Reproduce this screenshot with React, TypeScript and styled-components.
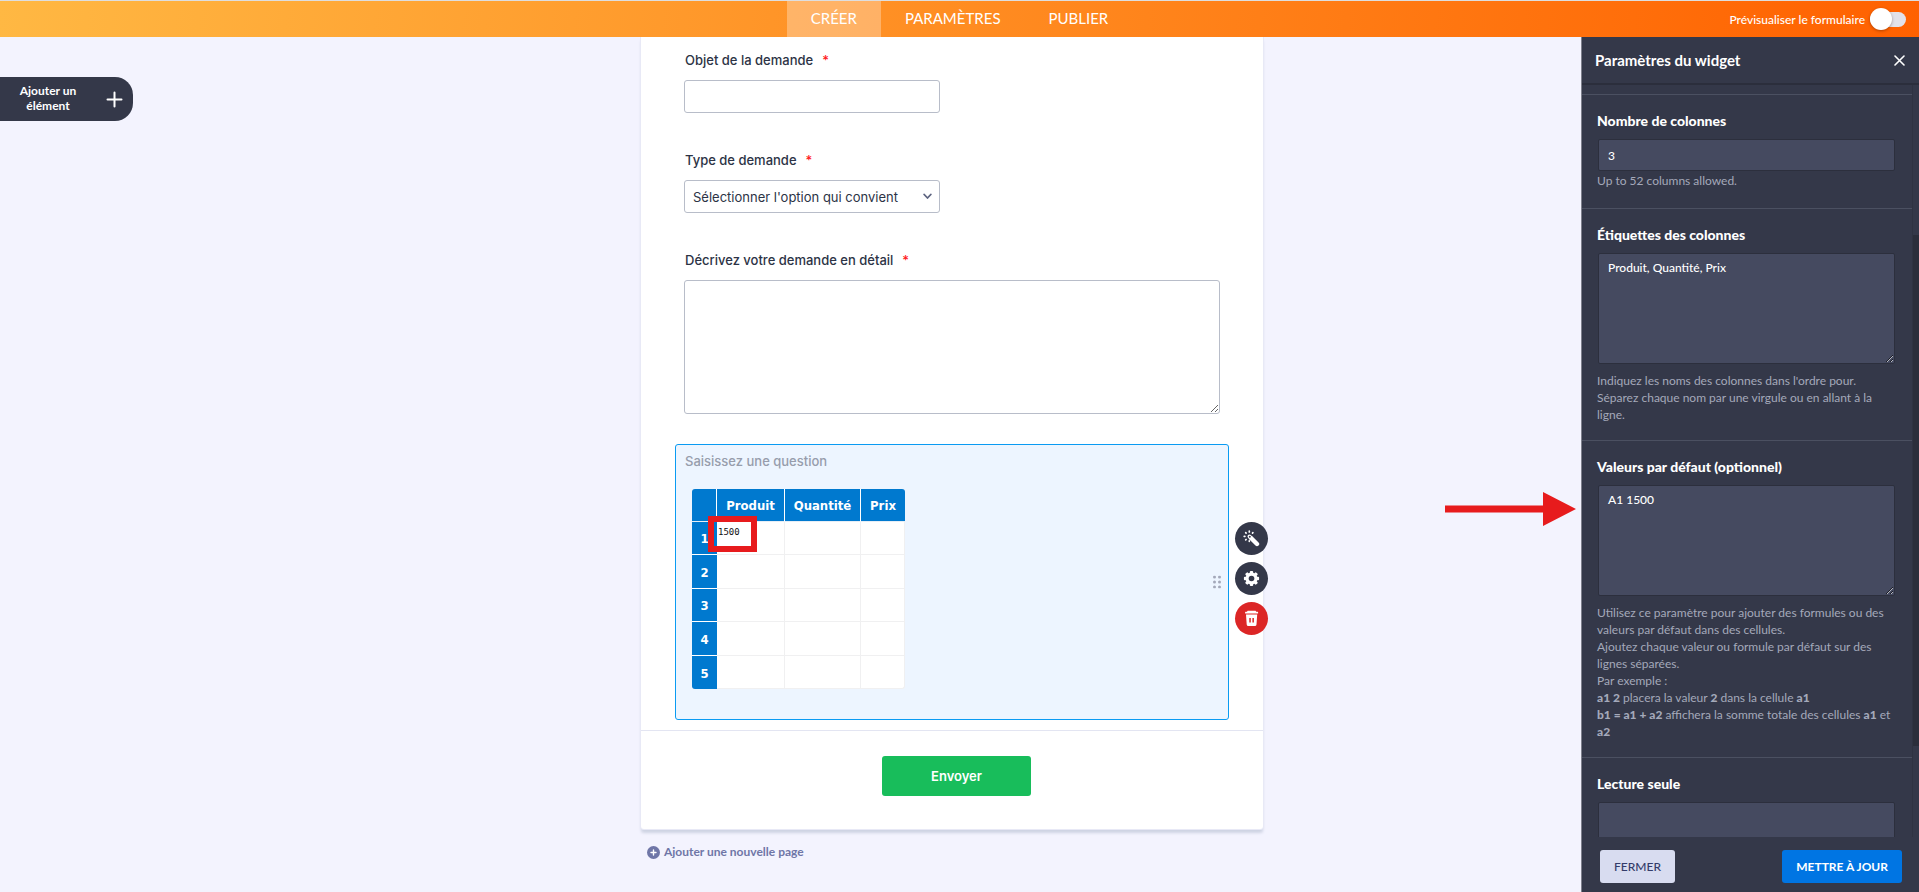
import React from 'react';
import styled, { createGlobalStyle, css } from 'styled-components';

const ui = '"Lato", "Open Sans", sans-serif';
const form = '"Inter", "Roboto", sans-serif';
const navy = '#343849';

const GlobalStyle = createGlobalStyle`
  *, *::before, *::after { box-sizing: border-box; }
  body { margin: 0; background: #f3f3fe; font-family: ${ui}; }
  button, input, textarea, select { font: inherit; margin: 0; }
  button { cursor: pointer; border: 0; padding: 0; }
`;

const Shell = styled.div`
  display: flex;
  flex-direction: column;
  height: 100vh;
  overflow: hidden;
`;

const TopBar = styled.header`
  flex: none;
  position: relative;
  z-index: 1;
  display: grid;
  grid-template-columns: 1fr auto 1fr;
  height: 37px;
  border-top: 1px solid #dedede;
  background: linear-gradient(95deg, #ffb843, #ff6100);
  color: #fff;
`;

const Tabs = styled.nav`
  grid-column: 2;
  display: flex;
`;

const Tab = styled.a<{ $active?: boolean }>`
  display: flex;
  align-items: center;
  padding: 0 24px 2px;
  font-size: 15px;
  color: #fff;
  text-decoration: none;
  background: ${p => (p.$active ? 'rgba(255, 255, 255, 0.3)' : 'transparent')};
`;

const PreviewToggle = styled.label`
  justify-self: end;
  display: flex;
  align-items: center;
  gap: 5px;
  padding-right: 13px;
  font-size: 12px;
  font-weight: 500;
`;

const Switch = styled.input`
  appearance: none;
  display: flex;
  align-items: center;
  width: 36px;
  height: 15px;
  border-radius: 8px;
  background: #e2e2ea;

  &::before {
    content: '';
    width: 22px;
    height: 22px;
    border-radius: 50%;
    background: #fff;
    box-shadow: 0 1px 3px rgba(60, 20, 0, 0.4);
  }
`;

const Workspace = styled.div`
  flex: 1;
  min-height: 0;
  display: grid;
  grid-template-columns: minmax(0, 1fr) 622px minmax(0, 1fr) 15px;
  grid-template-rows: minmax(0, 1fr);
`;

const AddElement = styled.button`
  justify-self: start;
  align-self: start;
  display: flex;
  align-items: center;
  justify-content: space-between;
  width: 133px;
  height: 44px;
  margin-top: 40px;
  padding: 0 10px 0 12px;
  border-radius: 0 18px 18px 0;
  background: ${navy};
  color: #fff;
  font-size: 12px;
  font-weight: 700;
  line-height: 15px;
`;

const AddText = styled.span`
  width: 72px;
  padding-bottom: 2px;
`;

const Canvas = styled.main`
  font-family: ${form};
  font-size: 13px;
  line-height: 20px;
  color: #2c3345;
`;

const Card = styled.form`
  background: #fff;
  border-radius: 0 0 3px 3px;
  box-shadow: 0 0 0 1px #e8e9f6, 0 4px 3px #ced3e3;
`;

const Fields = styled.div`
  padding: 13px 43px 10px;
`;

const Field = styled.div`
  display: flex;
  flex-direction: column;
  align-items: flex-start;
  gap: 10px;
  margin-bottom: 37px;

  &:nth-child(3) { margin-bottom: 30px; }
`;

const FieldLabel = styled.label`
  padding-left: 1px;
  font-weight: 500;
`;

const Star = styled.span`
  margin-left: 9px;
  color: #ff1a1c;
`;

const control = css`
  border: 1px solid #b8bdc9;
  border-radius: 3px;
  background: #fff;
  color: #2c3345;
`;

const TextInput = styled.input`
  ${control}
  width: 256px;
  height: 33px;
  padding: 0 8px;
`;

const SelectWrap = styled.div`
  display: grid;
  align-items: center;
  width: 256px;

  & > * { grid-area: 1 / 1; }
  svg { justify-self: end; margin-right: 8px; pointer-events: none; }
`;

const Select = styled.select`
  ${control}
  appearance: none;
  height: 33px;
  padding: 0 24px 0 8px;
`;

const LongText = styled.textarea`
  ${control}
  display: block;
  width: 100%;
  height: 134px;
  padding: 8px;
`;

const Selected = styled.section`
  position: relative;
  height: 276px;
  margin: 0 -9px;
  padding: 6px 16px 0;
  border: 1px solid #0a9bf2;
  border-radius: 3px;
  background: #edf5ff;
`;

const Question = styled.h2`
  margin: 0 -7px 18px;
  font-size: 13px;
  font-weight: 500;
  line-height: 20px;
  color: #979dac;
`;

const Sheet = styled.table`
  width: 213px;
  table-layout: fixed;
  border-spacing: 0;
  font-family: "DejaVu Sans Condensed", "DejaVu Sans", sans-serif;
  font-size: 13px;
  line-height: 16px;

  tr { height: 33px; }
  tbody tr:nth-child(even) { height: 34px; }
  thead th:first-child { border-top-left-radius: 3px; width: 25px; }
  thead th:last-child { border-top-right-radius: 3px; border-right: 0; width: 44px; }
  thead th:nth-child(2) { width: 68px; }
  tbody tr:last-child th { border-bottom-left-radius: 3px; border-bottom: 0; }
  tbody tr:last-child td:last-child { border-bottom-right-radius: 3px; }
`;

const HeadCell = styled.th`
  padding: 2px 0 0;
  border-right: 1px solid #fff;
  border-bottom: 1px solid #e6eef6;
  background: #0079cf;
  color: #fff;
`;

const RowHead = styled.th`
  padding: 2px 0 0;
  border-bottom: 1px solid #fff;
  background: #0079cf;
  color: #fff;
`;

const Cell = styled.td`
  position: relative;
  padding: 2px 1px 0;
  border-right: 1px solid #f0f0f1;
  border-bottom: 1px solid #f0f0f1;
  background: #fff;
  color: #111;
  font-family: "DejaVu Sans Mono", monospace;
  font-size: 9px;
  vertical-align: top;
`;

const RedFrame = styled.span`
  position: absolute;
  top: -6px;
  left: -9px;
  width: 49px;
  height: 36px;
  border: 6px solid #e71b1d;
`;

const Grip = styled.svg`
  position: absolute;
  right: 6px;
  top: 50%;
  transform: translateY(-50%);
  fill: #a3a8ba;
`;

const Tools = styled.div`
  position: absolute;
  top: 77px;
  left: 100%;
  margin-left: 7px;
  display: grid;
  gap: 7px;
`;

const Tool = styled.button<{ $danger?: boolean }>`
  display: grid;
  place-items: center;
  width: 33px;
  height: 33px;
  border-radius: 50%;
  background: ${p => (p.$danger ? '#dc2626' : navy)};
  color: ${p => (p.$danger ? '#dc2626' : navy)};
`;

const CardFooter = styled.div`
  display: flex;
  justify-content: center;
  padding: 25px 0 33px 9px;
  border-top: 1px solid #e3e5f2;
`;

const Submit = styled.button`
  width: 149px;
  height: 40px;
  border-radius: 3px;
  background: #18bd5b;
  color: #fff;
  font-weight: 600;
`;

const NewPage = styled.button`
  display: flex;
  align-items: center;
  gap: 4px;
  margin: 13px 0 0 6px;
  background: none;
  color: #6f76a7;
  font-family: ${ui};
  font-size: 12px;
  font-weight: 700;
  line-height: 20px;
`;

const Panel = styled.aside`
  grid-column: 3 / 5;
  justify-self: end;
  position: relative;
  display: flex;
  flex-direction: column;
  width: 338px;
  border-left: 1px solid #7e808c;
  background: ${navy};
  color: #fff;
  font-size: 12px;
`;

const PanelHead = styled.header`
  flex: none;
  display: flex;
  align-items: center;
  justify-content: space-between;
  height: 48px;
  padding: 0 14px 0 13px;
  border-bottom: 2px solid #2b2e3c;
`;

const PanelTitle = styled.h1`
  margin: 0;
  font-size: 15px;
  font-weight: 700;
`;

const Close = styled.button`
  display: flex;
  background: none;
`;

const PanelBody = styled.div`
  flex: 1;
  min-height: 0;
  display: grid;
  grid-template-columns: 1fr 7px;
  grid-template-rows: minmax(0, 1fr);
`;

const Settings = styled.div`
  padding-top: 9px;
  overflow: hidden;
`;

const Rail = styled.div`
  padding-top: 150px;
  border-left: 1px solid #2f3342;
`;

const Thumb = styled.div`
  height: 511px;
  background: #2b2e3b;
`;

const Setting = styled.div`
  padding: 16px 17px 17px 16px;
  border-top: 1px solid #4b5061;
`;

const SettingLabel = styled.label`
  display: block;
  margin-left: -1px;
  margin-bottom: 8px;
  font-size: 14px;
  font-weight: 900;
  line-height: 20px;
`;

const darkControl = css`
  display: block;
  width: 100%;
  border: 1px solid #2c2f3d;
  border-radius: 2px;
  background: #454a60;
  color: #fff;
  font-weight: 500;
  line-height: 16px;
`;

const DarkInput = styled.input<{ $tall?: boolean }>`
  ${darkControl}
  height: ${p => (p.$tall ? 44 : 32)}px;
  padding: 0 9px;
`;

const DarkArea = styled.textarea`
  ${darkControl}
  height: 111px;
  padding: 6px 9px;
`;

const Help = styled.p<{ $tight?: boolean }>`
  margin: ${p => (p.$tight ? '1px 0 2px -1px' : '8px 0 0 -1px')};
  line-height: 17px;
  color: #a4a9ba;

  strong { font-weight: 900; }
`;

const PanelFoot = styled.footer`
  flex: none;
  display: flex;
  justify-content: space-between;
  height: 55px;
  padding: 13px 17px 0 18px;
`;

const Action = styled.button<{ $primary?: boolean }>`
  height: 33px;
  padding: 0 14px;
  border-radius: 3px;
  font-weight: ${p => (p.$primary ? 700 : 500)};
  background: ${p => (p.$primary ? '#0075e3' : '#d8dcf0')};
  color: ${p => (p.$primary ? '#fff' : '#343c6a')};
`;

const Arrow = styled.svg`
  position: absolute;
  top: 455px;
  right: 100%;
  margin-right: 5px;
  fill: #e71b1d;
`;

const WandIcon = () => (
  <svg width="17" height="17" viewBox="0 0 17 17" fill="none" stroke="#fff" strokeLinecap="round">
    <path d="M8 8 14 14" strokeWidth="4.4" />
    <path d="M6.400 6.400 8 8" strokeWidth="3.800" />
    <circle cx="6.800" cy="6.800" r="1" fill={navy} stroke="none" />
    <path d="M6.300 1.200v.7M2.700 2.700l.4.4M1.200 6.300h.7M2.700 9.900l.4-.4M9.900 2.700l-.4.4M6.300 11.300v-.5" strokeWidth="1.700" />
  </svg>
);

const GearIcon = () => (
  <svg width="17" height="17" viewBox="-8.500 -8.500 17 17" fill="#fff">
    <circle r="5.900" />
    {[0, 45, 90, 135].map(a => (
      <rect key={a} x="-1.700" y="-7.600" width="3.400" height="15.200" rx="1" transform={`rotate(${a})`} />
    ))}
    <circle r="2.800" fill="currentColor" />
  </svg>
);

const TrashIcon = () => (
  <svg width="17" height="17" viewBox="0 0 17 17" fill="#fff">
    <path d="M4.600.8h8l.6.9h1.400q.5 0 .5.5v1.300h-13V2.200q0-.5.5-.5H4z" />
    <path d="M3 4.600h11.200l-.7 9.800q-.1 1.600-1.700 1.600H5.400q-1.600 0-1.700-1.600z" />
    <path d="M6.300 8h1.500v4.600H6.300zM9.400 8h1.500v4.600H9.400z" fill="currentColor" />
  </svg>
);

const columns = ['Produit', 'Quantité', 'Prix'];
const rows = [1, 2, 3, 4, 5];

export default function App() {
  return (
    <>
      <GlobalStyle />
      <Shell>
        <TopBar>
          <Tabs>
            <Tab href="#creer" $active>CRÉER</Tab>
            <Tab href="#parametres">PARAMÈTRES</Tab>
            <Tab href="#publier">PUBLIER</Tab>
          </Tabs>
          <PreviewToggle>
            Prévisualiser le formulaire
            <Switch type="checkbox" role="switch" />
          </PreviewToggle>
        </TopBar>

        <Workspace>
          <AddElement type="button">
            <AddText>Ajouter un élément</AddText>
            <svg width="17" height="17" viewBox="0 0 17 17" stroke="#fff" strokeWidth="2" strokeLinecap="round">
              <path d="M8.500 1.500v14M1.500 8.500h14" />
            </svg>
          </AddElement>

          <Canvas>
            <Card>
              <Fields>
                <Field>
                  <FieldLabel htmlFor="objet">Objet de la demande<Star>*</Star></FieldLabel>
                  <TextInput id="objet" />
                </Field>
                <Field>
                  <FieldLabel htmlFor="type">Type de demande<Star>*</Star></FieldLabel>
                  <SelectWrap>
                    <Select id="type">
                      <option>Sélectionner l'option qui convient</option>
                    </Select>
                    <svg width="9" height="7" viewBox="0 0 9 7" fill="none" stroke="#5d6480" strokeWidth="1.800" strokeLinecap="round" strokeLinejoin="round">
                      <path d="M1.200 1.500 4.500 5l3.300-3.500" />
                    </svg>
                  </SelectWrap>
                </Field>
                <Field>
                  <FieldLabel htmlFor="detail">Décrivez votre demande en détail<Star>*</Star></FieldLabel>
                  <LongText id="detail" />
                </Field>
                <Selected>
                  <Question>Saisissez une question</Question>
                  <Sheet>
                    <thead>
                      <tr>
                        <HeadCell />
                        {columns.map(c => <HeadCell key={c} scope="col">{c}</HeadCell>)}
                      </tr>
                    </thead>
                    <tbody>
                      {rows.map(r => (
                        <tr key={r}>
                          <RowHead scope="row">{r}</RowHead>
                          {columns.map((c, i) => (
                            <Cell key={c}>
                              {r === 1 && i === 0 && <>1500<RedFrame /></>}
                            </Cell>
                          ))}
                        </tr>
                      ))}
                    </tbody>
                  </Sheet>
                  <Grip width="9" height="13" viewBox="0 0 9 13">
                    {[1.5, 6.5, 11.5].map(y => (
                      <React.Fragment key={y}>
                        <circle cx="1.500" cy={y} r="1.500" />
                        <circle cx="6.500" cy={y} r="1.500" />
                      </React.Fragment>
                    ))}
                  </Grip>
                  <Tools>
                    <Tool type="button" aria-label="Assistant"><WandIcon /></Tool>
                    <Tool type="button" aria-label="Propriétés"><GearIcon /></Tool>
                    <Tool type="button" aria-label="Supprimer" $danger><TrashIcon /></Tool>
                  </Tools>
                </Selected>
              </Fields>
              <CardFooter>
                <Submit type="button">Envoyer</Submit>
              </CardFooter>
            </Card>
            <NewPage type="button">
              <svg width="13" height="13" viewBox="0 0 13 13">
                <circle cx="6.500" cy="6.500" r="6.500" fill="#6f76a7" />
                <path d="M6.500 4v5M4 6.500h5" stroke="#fff" strokeWidth="1.400" strokeLinecap="round" />
              </svg>
              Ajouter une nouvelle page
            </NewPage>
          </Canvas>

          <Panel>
            <Arrow width="132" height="34" viewBox="0 0 132 34">
              <path d="M0 13.500h98V0l33 17-33 17V20.500H0z" />
            </Arrow>
            <PanelHead>
              <PanelTitle>Paramètres du widget</PanelTitle>
              <Close type="button" aria-label="Fermer le panneau">
                <svg width="11" height="11" viewBox="0 0 11 11" stroke="#fff" strokeWidth="1.600" strokeLinecap="round">
                  <path d="M1 1l9 9M10 1 1 10" />
                </svg>
              </Close>
            </PanelHead>
            <PanelBody>
              <Settings>
                <Setting>
                  <SettingLabel htmlFor="nb">Nombre de colonnes</SettingLabel>
                  <DarkInput id="nb" defaultValue="3" />
                  <Help $tight>Up to 52 columns allowed.</Help>
                </Setting>
                <Setting>
                  <SettingLabel htmlFor="etiquettes">Étiquettes des colonnes</SettingLabel>
                  <DarkArea id="etiquettes" defaultValue="Produit, Quantité, Prix" />
                  <Help>
                    Indiquez les noms des colonnes dans l'ordre pour.<br />
                    Séparez chaque nom par une virgule ou en allant à la ligne.
                  </Help>
                </Setting>
                <Setting>
                  <SettingLabel htmlFor="valeurs">Valeurs par défaut (optionnel)</SettingLabel>
                  <DarkArea id="valeurs" defaultValue="A1 1500" />
                  <Help>
                    Utilisez ce paramètre pour ajouter des formules ou des valeurs par défaut dans des cellules.<br />
                    Ajoutez chaque valeur ou formule par défaut sur des lignes séparées.<br />
                    Par exemple :<br />
                    <strong>a1 2</strong> placera la valeur <strong>2</strong> dans la cellule <strong>a1</strong><br />
                    <strong>b1 = a1 + a2</strong> affichera la somme totale des cellules <strong>a1</strong> et <strong>a2</strong>
                  </Help>
                </Setting>
                <Setting>
                  <SettingLabel htmlFor="lecture">Lecture seule</SettingLabel>
                  <DarkInput id="lecture" $tall />
                </Setting>
              </Settings>
              <Rail><Thumb /></Rail>
            </PanelBody>
            <PanelFoot>
              <Action type="button">FERMER</Action>
              <Action type="button" $primary>METTRE À JOUR</Action>
            </PanelFoot>
          </Panel>
        </Workspace>
      </Shell>
    </>
  );
}
